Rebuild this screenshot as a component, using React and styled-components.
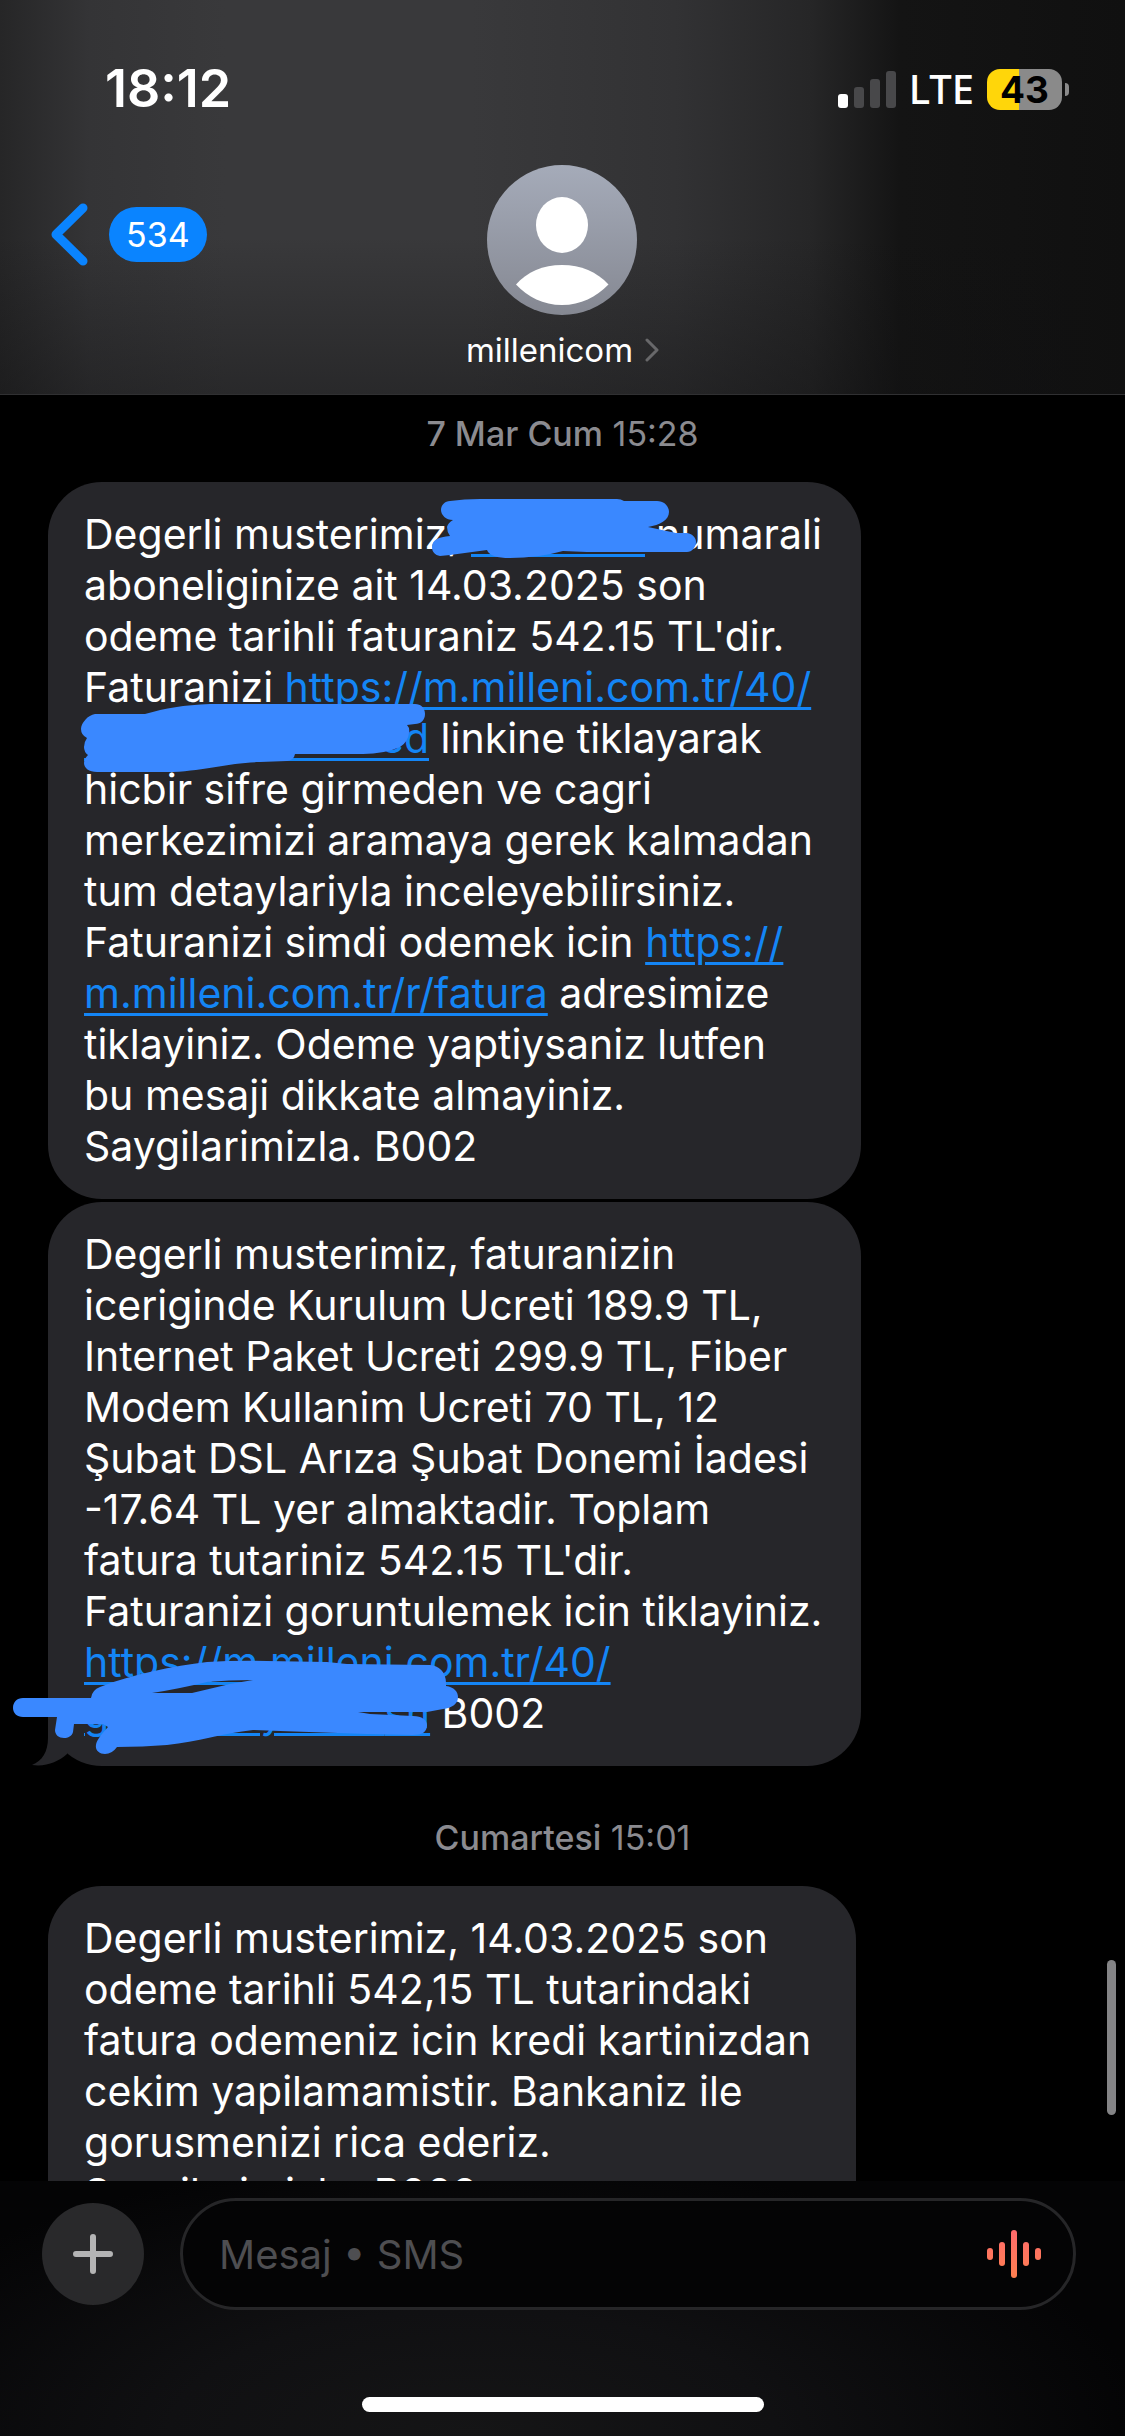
import styled, { createGlobalStyle } from 'styled-components';

const GlobalStyle = createGlobalStyle`
    * {
        box-sizing: border-box;
    }
    body {
        margin: 0;
        background: #000;
        color: #fff;
        font-family: Inter, 'Liberation Sans', sans-serif;
    }
    button {
        border: 0;
        padding: 0;
        background: none;
        color: inherit;
        font: inherit;
        cursor: pointer;
    }
    svg {
        display: block;
    }
`;

const Screen = styled.div`
    display: flex;
    flex-direction: column;
    height: 100vh;
    overflow: hidden;
`;

const Header = styled.header`
    flex: none;
    border-bottom: 1px solid #303032;
    background: linear-gradient(180deg, transparent 60%, rgba(16, 16, 17, 0.4) 100%),
        linear-gradient(90deg, #262627 0%, #343436 8%, #39393b 20%, #39393b 42%, #323234 60%, #262627 72%, #141414 80%, #101010 100%);
`;

const StatusBar = styled.div`
    display: flex;
    align-items: center;
    justify-content: space-between;
    padding: 58px 56px 0 105px;
`;

const Clock = styled.time`
    font-size: 52px;
    line-height: 62px;
    font-weight: 600;
`;

const StatusIcons = styled.div`
    display: flex;
    align-items: center;
    gap: 13px;
`;

const Network = styled.span`
    font-family: 'Noto Sans', sans-serif;
    font-size: 40px;
    line-height: 48px;
    font-weight: 500;
`;

const Battery = styled.div`
    display: flex;
    align-items: center;
    gap: 3px;
`;

const BatteryBody = styled.span`
    width: 75px;
    border-radius: 13px;
    background: linear-gradient(90deg, #ffd60a ${(props) => props.$level}%, #8a8a8a ${(props) => props.$level}%);
    color: #000;
    font-size: 37px;
    line-height: 41px;
    font-weight: 700;
    text-align: center;
`;

const BatteryTip = styled.span`
    width: 4px;
    height: 13px;
    border-radius: 0 6px 6px 0;
    background: #8a8a8a;
`;

const NavBar = styled.nav`
    display: grid;
    grid-template-columns: 1fr auto 1fr;
    align-items: start;
    padding: 45px 48px 23px;
`;

const BackButton = styled.button`
    display: flex;
    align-items: center;
    justify-self: start;
    gap: 19px;
    margin-top: 38px;
`;

const Unread = styled.span`
    padding: 0 17px;
    border-radius: 28px;
    background: #0a84ff;
    font-size: 34px;
    line-height: 55px;
`;

const Contact = styled.button`
    display: flex;
    flex-direction: column;
    align-items: center;
    gap: 14px;
`;

const ContactName = styled.span`
    display: flex;
    align-items: center;
    gap: 12px;
    font-size: 33px;
    line-height: 42px;
`;

const Thread = styled.main`
    position: relative;
    flex: 1;
    min-height: 0;
    overflow: hidden;
    padding: 0 48px;
`;

const Scrollbar = styled.div`
    position: absolute;
    top: 1565px;
    right: 9px;
    width: 9px;
    height: 155px;
    border-radius: 5px;
    background: #848486;
`;

const Stamp = styled.p`
    margin: 0;
    padding: ${(props) => (props.$first ? 20 : 50)}px 0 29px;
    color: #8b8b90;
    font-size: 34px;
    line-height: 38px;
    text-align: center;

    strong {
        font-weight: 500;
    }
`;

const Bubble = styled.article`
    position: relative;
    max-width: ${(props) => props.$width}px;
    margin-bottom: 3px;
    padding: 27px 36px;
    border-radius: 54px;
    background: #26262a;
    font-size: 41px;
    line-height: 51px;
    white-space: pre;
`;

const TextLink = styled.a`
    color: #1485f5;
    text-decoration: underline;
    text-decoration-thickness: 3px;
    text-underline-offset: 5px;
`;

// part of a link that is kept private
const Hidden = styled.span`
    display: inline-block;
    width: ${(props) => props.$width}px;
    height: 11px;
    margin-bottom: -8px;
    border-bottom: 3px solid #1485f5;
`;

const Scribble = styled.svg`
    position: absolute;
    top: 0;
    left: 0;
    overflow: visible;
    pointer-events: none;
`;

const Tail = styled.svg`
    position: absolute;
    bottom: 0;
    left: -16px;
`;

const Footer = styled.footer`
    flex: none;
    background: radial-gradient(ellipse 60% 110% at 42% 100%, #151516 0%, #101012 45%, #040405 100%);
`;

const Composer = styled.form`
    display: flex;
    align-items: center;
    gap: 36px;
    padding: 17px 49px 0 42px;
`;

const PlusButton = styled.button`
    display: grid;
    place-items: center;
    flex: none;
    width: 102px;
    height: 102px;
    border-radius: 50%;
    background: #29292b;
`;

const Field = styled.div`
    display: flex;
    align-items: center;
    flex: 1;
    height: 112px;
    padding: 0 32px 0 36px;
    border: 3px solid #262628;
    border-radius: 56px;
    background: #040405;
`;

const MessageInput = styled.input`
    flex: 1;
    min-width: 0;
    padding: 0;
    border: 0;
    outline: 0;
    background: none;
    color: #fff;
    font: inherit;
    font-size: 40px;
    line-height: 51px;

    &::placeholder {
        color: #4e4e51;
        opacity: 1;
    }
`;

const HomeIndicator = styled.div`
    width: 402px;
    height: 15px;
    margin: 87px auto 24px;
    border-radius: 8px;
    background: #fff;
`;

function SignalIcon() {
    return (
        <svg width="58" height="37" viewBox="0 0 58 37" aria-hidden="true">
            <rect x="0" y="23" width="10" height="14" rx="3" fill="#fff" />
            <rect x="16" y="16" width="10" height="21" rx="3" fill="#48484a" />
            <rect x="32" y="8" width="10" height="29" rx="3" fill="#48484a" />
            <rect x="48" y="0" width="10" height="37" rx="3" fill="#48484a" />
        </svg>
    );
}

function Avatar() {
    return (
        <svg width="150" height="150" viewBox="0 0 150 150" aria-hidden="true">
            <defs>
                <linearGradient id="avatar" x1="0" y1="0" x2="0" y2="1">
                    <stop offset="0" stopColor="#a5abb9" />
                    <stop offset="1" stopColor="#858892" />
                </linearGradient>
            </defs>
            <circle cx="75" cy="75" r="75" fill="url(#avatar)" />
            <ellipse cx="75" cy="60" rx="26" ry="28" fill="#fff" />
            <path d="M29 119.500C40 107 56 100 75 100s35 7 46.500 19.500C109 132 94 140 75 140s-34-8-46-20.500z" fill="#fff" />
        </svg>
    );
}

function WaveIcon() {
    const bars = [12, 24, 48, 24, 12];
    return (
        <svg width="54" height="48" viewBox="0 0 54 48" aria-hidden="true">
            <defs>
                <linearGradient id="wave" gradientUnits="userSpaceOnUse" x1="0" y1="0" x2="0" y2="48">
                    <stop offset="0" stopColor="#ff6a6c" />
                    <stop offset="1" stopColor="#ff8050" />
                </linearGradient>
            </defs>
            {bars.map((height, i) => (
                <rect key={i} x={i * 12} y={24 - height / 2} width="6" height={height} rx="3" fill="url(#wave)" />
            ))}
        </svg>
    );
}

function App() {
    return (
        <>
            <GlobalStyle />
            <Screen>
                <Header>
                    <StatusBar>
                        <Clock>18:12</Clock>
                        <StatusIcons>
                            <SignalIcon />
                            <Network>LTE</Network>
                            <Battery>
                                <BatteryBody $level={43}>43</BatteryBody>
                                <BatteryTip />
                            </Battery>
                        </StatusIcons>
                    </StatusBar>
                    <NavBar>
                        <BackButton type="button">
                            <svg width="42" height="63" viewBox="0 0 42 63" aria-hidden="true">
                                <path d="M35 5L8 31.500L35 58" stroke="#0a84ff" strokeWidth="9" strokeLinecap="round" strokeLinejoin="round" fill="none" />
                            </svg>
                            <Unread>534</Unread>
                        </BackButton>
                        <Contact type="button">
                            <Avatar />
                            <ContactName>
                                millenicom
                                <svg width="14" height="24" viewBox="0 0 14 24" aria-hidden="true">
                                    <path d="M2 2L12 12L2 22" stroke="#68686a" strokeWidth="3" strokeLinecap="round" strokeLinejoin="round" fill="none" />
                                </svg>
                            </ContactName>
                        </Contact>
                    </NavBar>
                </Header>

                <Thread>
                    <Stamp $first>
                        <strong>7 Mar Cum</strong> 15:28
                    </Stamp>
                    <Bubble $width={813}>
                        {'Degerli musterimiz, '}
                        <Hidden $width={174} />
                        {' numarali\naboneliginize ait 14.03.2025 son\nodeme tarihli faturaniz 542.15 TL\'dir.\nFaturanizi '}
                        <TextLink href="#fatura">
                            {'https://m.milleni.com.tr/40/\n'}
                            <Hidden $width={296} />
                            ed
                        </TextLink>
                        {' linkine tiklayarak\nhicbir sifre girmeden ve cagri\nmerkezimizi aramaya gerek kalmadan\ntum detaylariyla inceleyebilirsiniz.\nFaturanizi simdi odemek icin '}
                        <TextLink href="#odeme">{'https://\nm.milleni.com.tr/r/fatura'}</TextLink>
                        {' adresimize\ntiklayiniz. Odeme yaptiysaniz lutfen\nbu mesaji dikkate almayiniz.\nSaygilarimizla. B002'}
                        <Scribble width="813" height="300" viewBox="0 0 813 300" fill="#3a88ff" aria-hidden="true">
                            <path d="M393 28C393 23 397 19 402 19Q416 17 432 17H569Q573 17 576 19H609C616 19 621 24 621 30C621 38 612 43 600 45L628 51H639C645 52 648 56 648 60C648 65 644 70 639 70H539L515 69Q490 76 462 76Q442 76 439 68L402 73L392 74C387 73 384 70 384 65C384 58 390 55 402 54Q399 50 399 45Q400 41 405 38C398 38 393 33 393 28Z" />
                            <path d="M33 247C33 241 40 233 47 232H97C118 226 135 223 162 222H367C373 222 377 226 377 232C377 238 373 242 367 242L359 243Q362 246 361 251Q360 260 352 265Q336 272 315 272H247Q246 278 239 279L212 280C180 281 160 288 125 290H49C41 290 36 286 36 281Q36 277 40 273Q36 270 36 265Q36 260 39 256Q33 253 33 247Z" />
                        </Scribble>
                    </Bubble>
                    <Bubble $width={813}>
                        {
                            'Degerli musterimiz, faturanizin\niceriginde Kurulum Ucreti 189.9 TL,\nInternet Paket Ucreti 299.9 TL, Fiber\nModem Kullanim Ucreti 70 TL, 12\nŞubat DSL Arıza Şubat Donemi İadesi\n-17.64 TL yer almaktadir. Toplam\nfatura tutariniz 542.15 TL\'dir.\nFaturanizi goruntulemek icin tiklayiniz.\n'
                        }
                        <TextLink href="#detay">
                            {'https://m.milleni.com.tr/40/\ng'}
                            <Hidden $width={151} />y<Hidden $width={101} />
                            sn
                        </TextLink>
                        {' B002'}
                        <Tail width="36" height="54" viewBox="0 0 36 54" aria-hidden="true">
                            <path d="M16 0V26C16 40 10 49 0 53c14 2 26-3 35-11V10z" fill="#26262a" />
                        </Tail>
                        <Scribble width="813" height="564" viewBox="0 0 813 564" fill="#3a88ff" fillRule="evenodd" aria-hidden="true">
                            <path d="M-25 496H43Q44 488 52 485C85 472 125 464 159 460Q190 458 219 459L279 460L299 462L382 463C391 464 399 470 398 484C406 485 410 490 410 495C410 502 404 506 395 507L379 510H310L322 512Q344 513 365 514C374 514 379 518 379 523C379 530 374 533 365 533L319 532L232 529L205 528C175 531 150 540 119 543Q95 545 69 545Q64 552 57 552C51 552 47 548 48 543Q48 538 60 525L55 522H26L25 530C24 534 20 536 16 536C11 536 7 533 7 528L9 515H-25C-31 515 -35 511 -35 506C-35 500 -31 496 -25 496ZM104 491Q130 487 159 480Q180 478 205 478L182 482L144 491Z" />
                        </Scribble>
                    </Bubble>
                    <Stamp>
                        <strong>Cumartesi</strong> 15:01
                    </Stamp>
                    <Bubble $width={808}>
                        {
                            'Degerli musterimiz, 14.03.2025 son\nodeme tarihli 542,15 TL tutarindaki\nfatura odemeniz icin kredi kartinizdan\ncekim yapilamamistir. Bankaniz ile\ngorusmenizi rica ederiz.\nSaygilarimizla. B002'
                        }
                    </Bubble>
                    <Scrollbar />
                </Thread>

                <Footer>
                    <Composer>
                        <PlusButton type="button" aria-label="Ekle">
                            <svg width="40" height="40" viewBox="0 0 40 40" aria-hidden="true">
                                <path d="M20 3V37M3 20H37" stroke="#b4b4b5" strokeWidth="6" strokeLinecap="round" />
                            </svg>
                        </PlusButton>
                        <Field>
                            <MessageInput type="text" aria-label="Mesaj" placeholder="Mesaj • SMS" />
                            <button type="button" aria-label="Ses kaydet">
                                <WaveIcon />
                            </button>
                        </Field>
                    </Composer>
                    <HomeIndicator />
                </Footer>
            </Screen>
        </>
    );
}

export default App;
